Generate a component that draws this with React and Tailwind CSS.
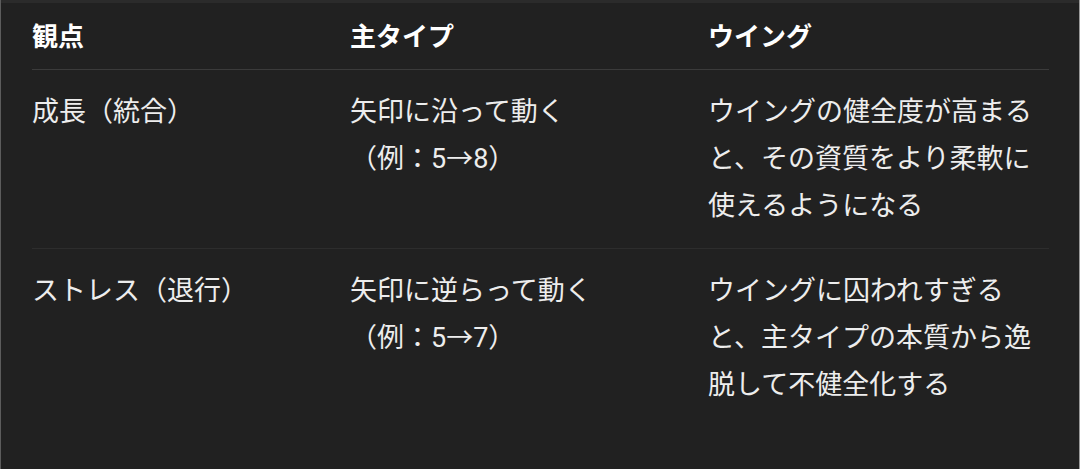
import React from 'react';

const rows = [
    {
        view: '成長（統合）',
        main: ['矢印に沿って動く', '（例：5→8）'],
        wing: 'ウイングの健全度が高まると、その資質をより柔軟に使えるようになる',
    },
    {
        view: 'ストレス（退行）',
        main: ['矢印に逆らって動く', '（例：5→7）'],
        wing: 'ウイングに囚われすぎると、主タイプの本質から逸脱して不健全化する',
    },
];

export default function App() {
    return (
        <div
            className="w-[1080px] h-[469px] bg-[#212121] border-l border-r border-l-[#5c5c5c] border-r-[#9a9a9a] overflow-hidden"
            style={{ fontFamily: 'Roboto, "Noto Sans CJK JP", sans-serif' }}
        >
            {/* top strip */}
            <div className="h-[3px] bg-[#2b2b2b]"></div>

            <div className="pl-[31px]">
                <div className="w-[1017px]">
                    {/* Header */}
                    <div className="grid grid-cols-[318px_358px_341px] pt-[11px] pb-[9px] border-b border-[#3b3b3b] text-[26px] leading-[46px] font-bold text-white">
                        <div>観点</div>
                        <div>主タイプ</div>
                        <div>ウイング</div>
                    </div>

                    {/* Body */}
                    {rows.map((r, i) => (
                        <div
                            key={i}
                            className={
                                'grid grid-cols-[318px_358px_341px] pt-[19px] pb-[18px] text-[27px] leading-[47px] text-[#ededed] ' +
                                (i === 0 ? 'border-b border-[#2d2d2d]' : '')
                            }
                        >
                            <div>{r.view}</div>
                            <div>
                                <div>{r.main[0]}</div>
                                <div>{r.main[1]}</div>
                            </div>
                            <div>{r.wing}</div>
                        </div>
                    ))}
                </div>
            </div>
        </div>
    );
}
